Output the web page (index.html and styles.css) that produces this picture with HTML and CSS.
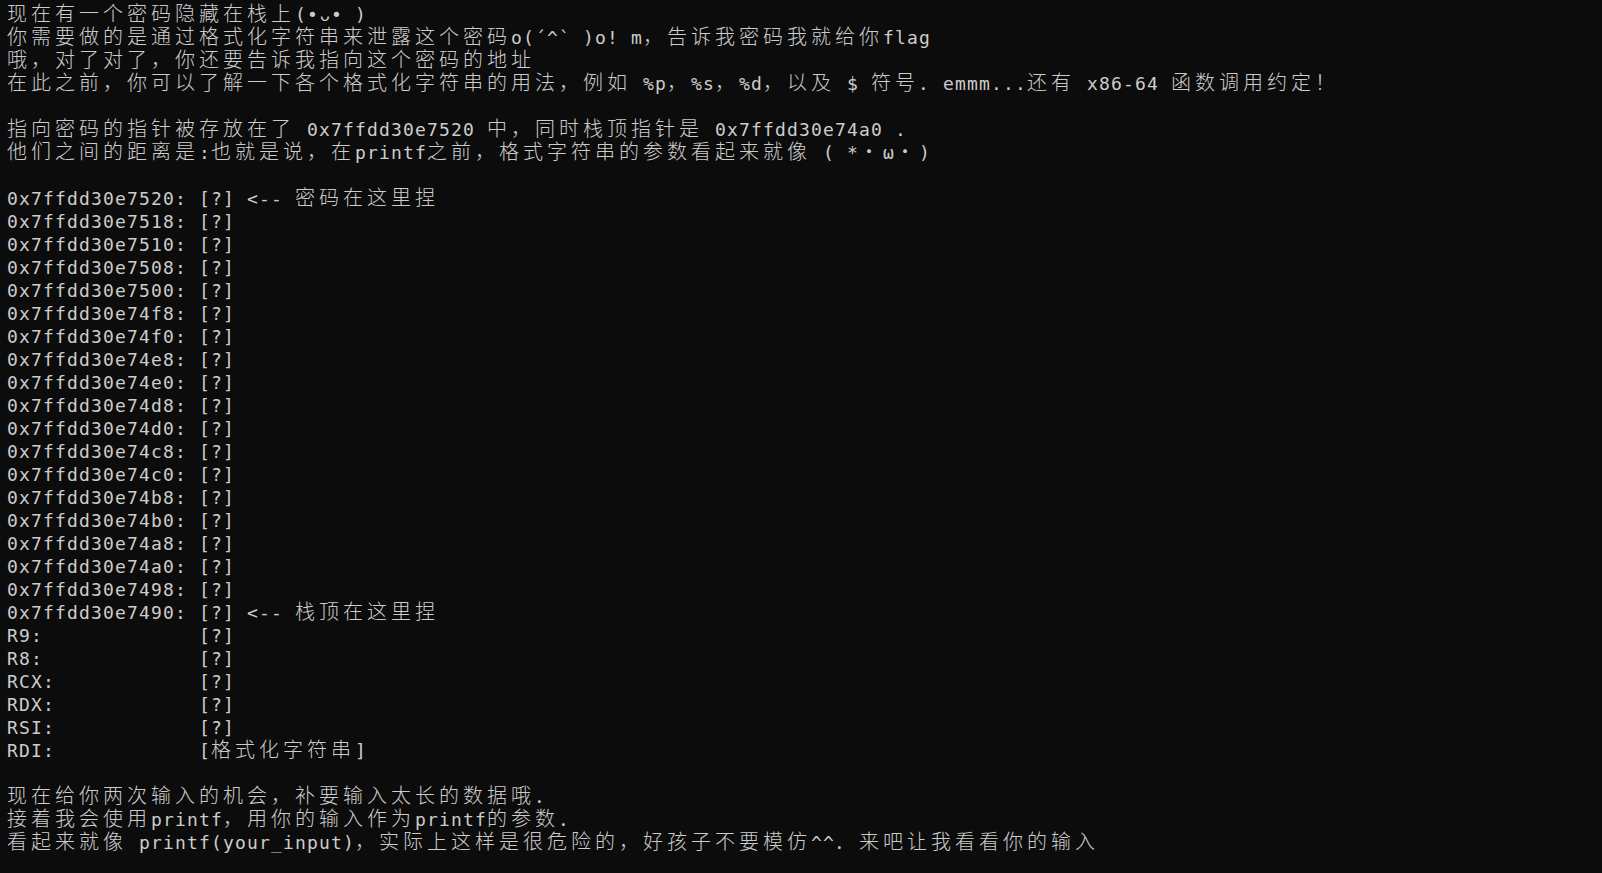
FILE: index.html
```html
<!DOCTYPE html>
<html lang="zh">
<head>
<meta charset="utf-8">
<title>terminal</title>
<link rel="stylesheet" href="styles.css">
</head>
<body>
<div class="term">
<div class="ln"><span class="c">现在有一个密码隐藏在栈上</span>(•<span class="g">ᴗ</span>• )</div>
<div class="ln"><span class="c">你需要做的是通过格式化字符串来泄露这个密码</span>o(´^` )o! m<span class="c">，告诉我密码我就给你</span>flag</div>
<div class="ln"><span class="c">哦，对了对了，你还要告诉我指向这个密码的地址</span></div>
<div class="ln"><span class="c">在此之前，你可以了解一下各个格式化字符串的用法，例如</span> %p<span class="c">，</span>%s<span class="c">，</span>%d<span class="c">，以及</span> $ <span class="c">符号．</span>emmm...<span class="c">还有</span> x86-64 <span class="c">函数调用约定！</span></div>
<div class="ln"></div>
<div class="ln"><span class="c">指向密码的指针被存放在了</span> 0x7ffdd30e7520 <span class="c">中，同时栈顶指针是</span> 0x7ffdd30e74a0 .</div>
<div class="ln"><span class="c">他们之间的距离是</span>:<span class="c">也就是说，在</span>printf<span class="c">之前，格式字符串的参数看起来就像</span> ( *<span class="c">・</span>ω<span class="c">・</span>)</div>
<div class="ln"></div>
<div class="ln">0x7ffdd30e7520: [?] &lt;-- <span class="c">密码在这里捏</span></div>
<div class="ln">0x7ffdd30e7518: [?]</div>
<div class="ln">0x7ffdd30e7510: [?]</div>
<div class="ln">0x7ffdd30e7508: [?]</div>
<div class="ln">0x7ffdd30e7500: [?]</div>
<div class="ln">0x7ffdd30e74f8: [?]</div>
<div class="ln">0x7ffdd30e74f0: [?]</div>
<div class="ln">0x7ffdd30e74e8: [?]</div>
<div class="ln">0x7ffdd30e74e0: [?]</div>
<div class="ln">0x7ffdd30e74d8: [?]</div>
<div class="ln">0x7ffdd30e74d0: [?]</div>
<div class="ln">0x7ffdd30e74c8: [?]</div>
<div class="ln">0x7ffdd30e74c0: [?]</div>
<div class="ln">0x7ffdd30e74b8: [?]</div>
<div class="ln">0x7ffdd30e74b0: [?]</div>
<div class="ln">0x7ffdd30e74a8: [?]</div>
<div class="ln">0x7ffdd30e74a0: [?]</div>
<div class="ln">0x7ffdd30e7498: [?]</div>
<div class="ln">0x7ffdd30e7490: [?] &lt;-- <span class="c">栈顶在这里捏</span></div>
<div class="ln">R9:             [?]</div>
<div class="ln">R8:             [?]</div>
<div class="ln">RCX:            [?]</div>
<div class="ln">RDX:            [?]</div>
<div class="ln">RSI:            [?]</div>
<div class="ln">RDI:            [<span class="c">格式化字符串</span>]</div>
<div class="ln"></div>
<div class="ln"><span class="c">现在给你两次输入的机会，补要输入太长的数据哦．</span></div>
<div class="ln"><span class="c">接着我会使用</span>printf<span class="c">，用你的输入作为</span>printf<span class="c">的参数．</span></div>
<div class="ln"><span class="c">看起来就像</span> printf(your_input)<span class="c">，实际上这样是很危险的，好孩子不要模仿</span>^^<span class="c">．来吧让我看看你的输入</span></div>
</div>
</body>
</html>
```

FILE: styles.css
```css
html, body {
  margin: 0;
  padding: 0;
  background: #0c0c0c;
}

body {
  width: 1602px;
  height: 873px;
  overflow: hidden;
}

.term {
  padding: 3px 0 0 7px;
  color: #cccccc;
  font-family: "DejaVu Sans Mono", "Noto Sans CJK SC", monospace;
  font-size: 18px;
  line-height: 23px;
  letter-spacing: 1.163px;
}

.ln {
  height: 23px;
  white-space: pre;
}

.c {
  font-family: "Noto Sans CJK SC", sans-serif;
  font-size: 20px;
  line-height: 18px;
  letter-spacing: 4px;
  font-weight: 300;
}

.g {
  display: inline-block;
  width: 12px;
  text-align: center;
  letter-spacing: 0;
  font-family: "DejaVu Sans", sans-serif;
  font-size: 16px;
}
```
